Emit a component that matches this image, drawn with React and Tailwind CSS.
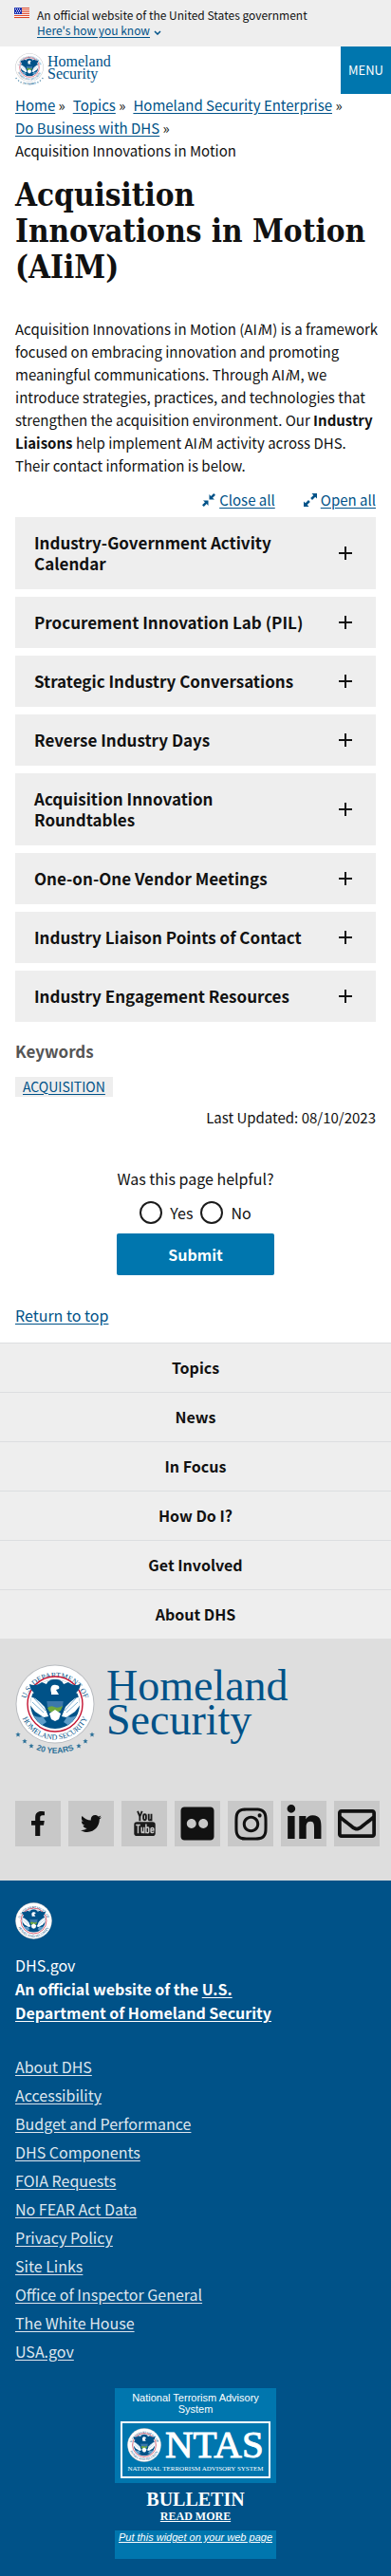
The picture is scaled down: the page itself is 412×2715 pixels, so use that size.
import React from "react";
import { FaFacebookF, FaTwitter, FaFlickr, FaInstagram, FaLinkedinIn, FaRegEnvelope } from "react-icons/fa";

function Seal({ id, className, stars = false, textColor = "#005288" }) {
  return (
    <svg viewBox={stars ? "0 0 84 98" : "0 0 84 84"} className={className} role="img" aria-label="U.S. Department of Homeland Security seal">
      <defs>
        <path id={id + "-top"} d="M10 46A32 32 0 1 1 74 46" />
        <path id={id + "-bottom"} d="M4.5 42A37.5 37.5 0 0 0 79.5 42" />
        <path id={id + "-years"} d="M2 75.2A52 52 0 0 0 82 75.2" />
        <clipPath id={id + "-clip"}>
          <circle cx="42" cy="42" r="26" />
        </clipPath>
      </defs>
      <circle cx="42" cy="42" r="41.5" fill="#b9bcc0" />
      <circle cx="42" cy="42" r="40.5" fill="#fff" />
      <text fontFamily="'Liberation Serif', serif" fontSize="8" fill={textColor} textAnchor="middle">
        <textPath href={"#" + id + "-top"} startOffset="50%">U.S. DEPARTMENT OF</textPath>
      </text>
      <text fontFamily="'Liberation Serif', serif" fontSize="8" fill={textColor} textAnchor="middle">
        <textPath href={"#" + id + "-bottom"} startOffset="50%">HOMELAND SECURITY</textPath>
      </text>
      <circle cx="42" cy="42" r="29" fill="#fff" stroke="#c41230" strokeWidth="1.4" />
      <circle cx="42" cy="42" r="26" fill="#005288" />
      <g clipPath={"url(#" + id + "-clip)"}>
        <path d="M10 10h64v26l-10-6-8-6-14-2-14 2-8 6-10 6z" fill="#fff" />
        <path d="M15 34l6 2 5 4 5 5 4 10-5 1-9-6-7-9z" fill="#fff" />
        <path d="M69 34l-6 2-5 4-5 5-4 10 5 1 9-6 7-9z" fill="#fff" />
        <path d="M18 40l12 11M20 36l12 13M66 40L54 51M64 36L52 49" stroke="#7fb2d5" strokeWidth="1" />
        <path d="M19 54q6 3 10 1l4 6-6 4zM65 54q-6 3-10 1l-4 6 6 4z" fill="#5e9cc8" />
      </g>
      <path d="M15 21c5 2 9 1 13-2l5 2c1-3 4-5 9-5s8 2 9 5l5-2c4 3 8 4 13 2-1 7-5 9-7 11-2 6-5 8-9 9l-3 10-8 4-8-4-3-10c-4-1-7-3-9-9-2-2-6-4-7-11z" fill="#005288" />
      <path d="M38 30c-2-6 1-9 5-8 3 0 4 2 3 4l-3 1 3 5h-8z" fill="#fff" />
      <path d="M33 36h18l-1 9-8 6-8-6z" fill="#3c78ab" />
      <path d="M33 35h18v4H33z" fill="#005288" />
      <path d="M34 46q4-3 7-1 4 2 9-1l-2 5-6 3-6-2z" fill="#6fa83c" />
      <path d="M36 52l6-4 6 4-2 6-4 2-4-2z" fill="#fff" />
      {stars && (
        <g fill="#2a6f97">
          {[[3, 74], [10, 81], [17, 86], [67, 86], [74, 81], [81, 74]].map(([x, y]) => (
            <path key={x} d={`M${x} ${y - 2.6}l.8 1.800 1.900.1-1.500 1.300.5 1.900-1.700-1-1.700 1 .5-1.900-1.500-1.300 1.900-.1z`} />
          ))}
          <text fontFamily="'Liberation Sans', sans-serif" fontSize="8.500" fontWeight="bold" textAnchor="middle">
            <textPath href={"#" + id + "-years"} startOffset="50%">20 YEARS</textPath>
          </text>
        </g>
      )}
    </svg>
  );
}

function Flag() {
  return (
    <svg viewBox="0 0 16 11" className="mt-2 h-[11px] w-4 shrink-0" aria-hidden="true" shapeRendering="crispEdges">
      <path fill="#fff" d="M0 0h16v11H0z" />
      <path fill="#db3e1f" d="M0 0h16v1H0zM0 2h16v1H0zM0 4h16v1H0zM0 6h16v1H0zM0 8h16v1H0zM0 10h16v1H0z" />
      <path fill="#1e33b1" d="M0 0h8v7H0z" />
      <path fill="#fff" d="M1 1h1v1H1zM3 1h1v1H3zM5 1h1v1H5zM2 3h1v1H2zM4 3h1v1H4zM6 3h1v1H6zM1 5h1v1H1zM3 5h1v1H3zM5 5h1v1H5z" />
    </svg>
  );
}

function YouTubeStacked() {
  return (
    <svg viewBox="0 0 24 30" className="h-[28px] w-[23px]" aria-hidden="true">
      <g fill="none" stroke="#1b1b1b" strokeWidth="2">
        <path d="M4 1l2.500 6L9 1M6.500 6v6" />
        <rect x="10.500" y="4.500" width="3" height="6.500" rx="1.500" />
        <path d="M16.500 4v6q0 1.500 1.500 1t1.500-2V4v8" />
      </g>
      <rect x="0" y="13" width="24" height="16" rx="3" fill="#1b1b1b" />
      <g fill="none" stroke="#c6c6c6" strokeWidth="1.600">
        <path d="M2 16.500h5M4.500 16.500V26M8.500 19v5q0 1.500 1.200 1t1.500-2V19v7M13.500 15.500V26M13.500 20q3-1.500 3 .5v4q0 1.500-3 .5M22 24q0 1.300-1.500 1.300T19 24v-3q0-1.300 1.500-1.300T22 21v1.500h-3" />
      </g>
    </svg>
  );
}

const ACCORDIONS = [
  "Industry-Government Activity Calendar",
  "Procurement Innovation Lab (PIL)",
  "Strategic Industry Conversations",
  "Reverse Industry Days",
  "Acquisition Innovation Roundtables",
  "One-on-One Vendor Meetings",
  "Industry Liaison Points of Contact",
  "Industry Engagement Resources",
];

const CRUMBS = ["Home", "Topics", "Homeland Security Enterprise", "Do Business with DHS"];

const FOOTER_NAV = ["Topics", "News", "In Focus", "How Do I?", "Get Involved", "About DHS"];

const FOOTER_LINKS = [
  "About DHS",
  "Accessibility",
  "Budget and Performance",
  "DHS Components",
  "FOIA Requests",
  "No FEAR Act Data",
  "Privacy Policy",
  "Site Links",
  "Office of Inspector General",
  "The White House",
  "USA.gov",
];

const SOCIAL = [
  { name: "Facebook", icon: <FaFacebookF size={26} /> },
  { name: "Twitter", icon: <FaTwitter size={22} /> },
  { name: "YouTube", icon: <YouTubeStacked /> },
  { name: "Flickr", icon: <FaFlickr size={40} /> },
  { name: "Instagram", icon: <FaInstagram size={39} /> },
  { name: "LinkedIn", icon: <FaLinkedinIn size={41} /> },
  { name: "Email", icon: <FaRegEnvelope size={40} /> },
];

const link = "text-[#005288] underline underline-offset-2";

export default function App() {
  return (
    <div className="bg-white font-['Noto_Sans_CJK_SC',sans-serif] text-[15px] leading-6 text-[#111]">
      <div className="flex gap-2 bg-[#eee] px-[15px] pb-[9px]">
        <Flag />
        <div className="pt-2 text-xs leading-4">
          <p>An official website of the United States government</p>
          <button type="button" className="flex items-center gap-1 text-[#005288]">
            <span className="underline underline-offset-2">Here's how you know</span>
            <svg viewBox="0 0 8 5" className="mt-1 h-[5px] w-2" fill="none" stroke="currentColor" strokeWidth="1.500" aria-hidden="true">
              <path d="M1 1l3 3 3-3" />
            </svg>
          </button>
        </div>
      </div>

      <header className="flex justify-between">
        <a href="#home" className="flex gap-1 pt-[7px] pl-4" aria-label="Homeland Security home">
          <Seal id="head" stars className="h-[35px] w-[30px]" />
          <span className="pt-[2px] font-['Liberation_Serif',serif] text-[16px] leading-[13px] text-[#005288]">
            Homeland
            <br />
            Security
          </span>
        </a>
        <button type="button" className="h-[50px] w-[53px] bg-[#0076ae] text-[13px] text-white">MENU</button>
      </header>

      <main className="px-4">
        <nav aria-label="Breadcrumb">
          <ol className="flex flex-wrap gap-x-2">
            {CRUMBS.map((c) => (
              <li key={c}>
                <a href="#crumb" className={link}>{c}</a> »
              </li>
            ))}
            <li>Acquisition Innovations in Motion</li>
          </ol>
        </nav>

        <h1 className="mt-4 font-['DejaVu_Serif_Condensed','DejaVu_Serif',serif] text-[33px] leading-[38px] font-bold">
          Acquisition Innovations in Motion (AIiM)
        </h1>

        <p className="mt-[34px] -mr-2">
          Acquisition Innovations in Motion (AI<em>i</em>M) is a framework focused on embracing innovation and promoting
          meaningful communications. Through AI<em>i</em>M, we introduce strategies, practices, and technologies that
          strengthen the acquisition environment. Our <strong>Industry Liaisons</strong> help implement AI<em>i</em>M
          activity across DHS. Their contact information is below.
        </p>

        <div className="mt-3 flex justify-end gap-[30px]">
          <button type="button" className="flex items-center gap-1 text-[#005288]">
            <svg viewBox="0 0 14 14" className="h-[14px] w-[14px]" fill="currentColor" aria-hidden="true">
              <path d="M7.500 1v5.500H13L11 4.800 14 1.800 12.200 0 9.300 3zM6.500 13V7.500H1l2 1.700L0 12.200 1.800 14l2.900-3z" />
            </svg>
            <span className="underline underline-offset-2">Close all</span>
          </button>
          <button type="button" className="flex items-center gap-1 text-[#005288]">
            <svg viewBox="0 0 14 14" className="h-[14px] w-[14px]" fill="currentColor" aria-hidden="true">
              <path d="M8.500 0H14v5.500L12.200 3.700 9 6.900 7.200 5.100 10.300 2zM5.500 14H0V8.500l1.800 1.800L5 7.100 6.800 8.900 3.700 12z" />
            </svg>
            <span className="underline underline-offset-2">Open all</span>
          </button>
        </div>

        <div className="mt-[6px] flex flex-col gap-2">
          {ACCORDIONS.map((title) => (
            <h2 key={title}>
              <button type="button" className="flex w-full items-center justify-between bg-[#eee] py-4 pr-[25px] pl-5 text-left text-[17px] leading-[22px] font-bold">
                <span className="max-w-[295px]">{title}</span>
                <svg viewBox="0 0 14 14" className="h-[14px] w-[14px] shrink-0" stroke="currentColor" strokeWidth="2" aria-hidden="true">
                  <path d="M7 0v14M0 7h14" />
                </svg>
              </button>
            </h2>
          ))}
        </div>

        <h3 className="mt-[19px] text-[17px] leading-6 font-bold text-[#555]">Keywords</h3>
        <a href="#keyword" className="mt-[15px] inline-block bg-[#eee] px-2 text-sm leading-[21px] text-[#005288] underline underline-offset-2">ACQUISITION</a>
        <p className="mt-[9px] text-right">Last Updated: 08/10/2023</p>

        <form className="mt-10 flex flex-col items-center text-base" onSubmit={(e) => e.preventDefault()}>
          <fieldset>
            <legend className="w-full text-center">Was this page helpful?</legend>
            <div className="mt-3 flex justify-center gap-2">
              {["Yes", "No"].map((v) => (
                <label key={v} className="flex items-center gap-2">
                  <input type="radio" name="helpful" className="h-6 w-6 appearance-none rounded-full border-2 border-[#1b1b1b] bg-white" />
                  {v}
                </label>
              ))}
            </div>
          </fieldset>
          <button type="submit" className="mt-[10px] h-11 w-[166px] rounded-xs bg-[#0076ae] font-bold text-white">Submit</button>
        </form>

        <a href="#top" className={"mt-[30px] inline-block text-base " + link}>Return to top</a>
      </main>

      <footer>
        <nav className="mt-4 bg-[#eee]" aria-label="Footer">
          {FOOTER_NAV.map((n) => (
            <a key={n} href="#section" className="block border-t border-[#dcdee0] py-[13px] text-center text-base leading-[25px] font-bold">{n}</a>
          ))}
        </nav>

        <div className="bg-[#dedede] pt-[27px] pb-9">
          <a href="#home" className="flex gap-3 px-4" aria-label="Homeland Security">
            <Seal id="foot" stars className="h-[98px] w-[84px]" />
            <span className="pt-[5px] font-['Liberation_Serif',serif] text-[46px] leading-[36px] text-[#005288]">
              Homeland
              <br />
              Security
            </span>
          </a>
          <div className="mt-[46px] flex gap-2 pl-4">
            {SOCIAL.map((s) => (
              <a key={s.name} href="#social" aria-label={s.name} className="flex h-12 w-12 shrink-0 items-center justify-center bg-[#c8c8c8]">
                {s.icon}
              </a>
            ))}
          </div>
        </div>

        <div className="bg-[#005288] px-4 pt-[23px] pb-5 text-base text-white">
          <Seal id="ident" className="h-[39px] w-[39px]" />
          <p className="mt-[15px] leading-[25px]">DHS.gov</p>
          <p className="max-w-[290px] leading-[25px] font-bold">
            An official website of the <a href="#dhs" className="underline underline-offset-2">U.S. Department of Homeland Security</a>
          </p>
          <ul className="mt-[29px] text-[#dfe6ee]">
            {FOOTER_LINKS.map((l) => (
              <li key={l} className="leading-[30px]">
                <a href="#link" className="underline underline-offset-2">{l}</a>
              </li>
            ))}
          </ul>

          <section className="mx-auto mt-6 w-[170px] font-['Liberation_Sans',sans-serif] text-white" aria-label="National Terrorism Advisory System">
            <div className="bg-[#0076ae] px-[5px] pt-1 pb-1">
              <p className="px-2 text-center text-[11px] leading-3">National Terrorism Advisory System</p>
              <svg viewBox="0 0 160 64" className="mt-1 w-full" role="img" aria-label="NTAS">
                <rect x="2" y="4" width="156" height="58" fill="none" stroke="#fff" strokeWidth="2" />
                <text x="48" y="41" fontFamily="'Liberation Serif', serif" fontSize="41" fill="#fff" stroke="#fff" strokeWidth="1">NTAS</text>
                <text x="80" y="55" fontFamily="'Liberation Serif', serif" fontSize="7" fill="#fff" textAnchor="middle">NATIONAL TERRORISM ADVISORY SYSTEM</text>
                <g transform="translate(8 10)">
                  <Seal id="ntas" className="h-[36px] w-[36px]" />
                </g>
              </svg>
            </div>
            <a href="#bulletin" className="block pt-2 pb-[7px] text-center font-['Liberation_Serif',serif]">
              <span className="block text-[20px] leading-[19px] font-bold">BULLETIN</span>
              <span className="block text-xs leading-4 font-bold underline">READ MORE</span>
            </a>
            <div className="bg-[#0076ae] pb-4 text-center text-[11px] leading-[14px] italic">
              <a href="#widget" className="underline">Put this widget on your web page</a>
            </div>
          </section>
        </div>
      </footer>
    </div>
  );
}
